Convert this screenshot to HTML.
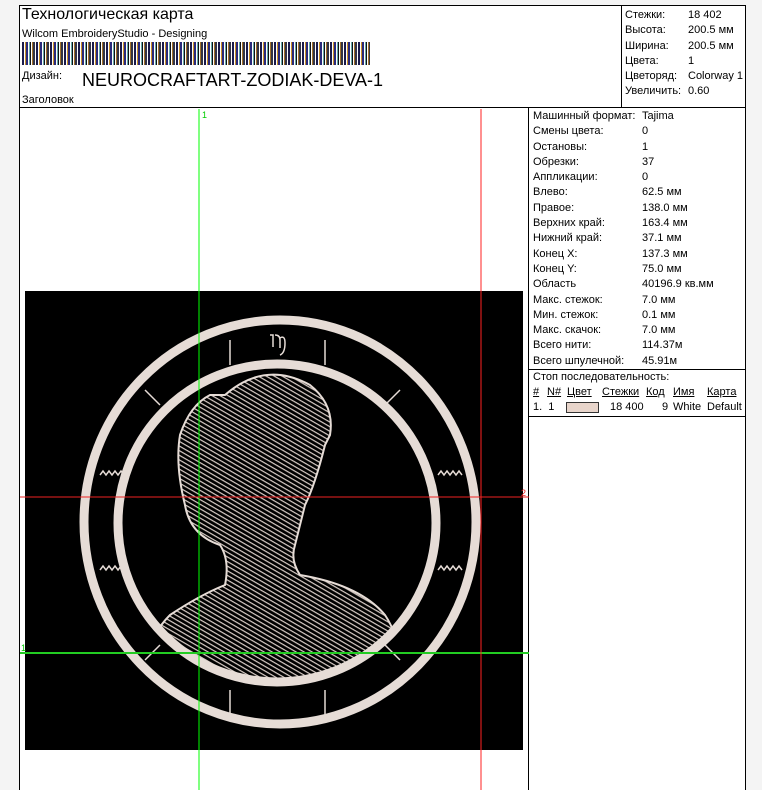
<!DOCTYPE html>
<html><head><meta charset="utf-8"><style>
*{margin:0;padding:0;box-sizing:border-box}
html,body{width:762px;height:790px;overflow:hidden}
body{background:#fff;position:relative;font-family:"Liberation Sans",sans-serif;color:#000}
.a{position:absolute;white-space:nowrap}
.s{font-size:11px;line-height:13px}
.l{position:absolute;background:#000}
</style></head><body>
<div style="position:absolute;left:0;top:0;width:762px;height:790px;background:#f4f4f4"></div>
<div style="position:absolute;left:19px;top:5px;width:727px;height:785px;background:#fff;border:1px solid #000;border-bottom:none"></div>
<div class="l" style="left:19px;top:107px;width:727px;height:1px"></div>
<div class="l" style="left:621px;top:5px;width:1px;height:102px"></div>
<div class="l" style="left:528px;top:107px;width:1px;height:683px"></div>
<div class="a" style="left:22px;top:6px;font-size:16px">Технологическая карта</div>
<div class="a s" style="left:22px;top:28px">Wilcom EmbroideryStudio - Designing</div>
<div class="a" style="left:22px;top:42px;width:348px;height:23px;background:repeating-linear-gradient(90deg,#1a1a4a 0 2px,#fff 2px 3px,#c8902a 3px 4px,#2a2a7a 4px 6px,#fff 6px 7px,#6aa 7px 8px,#111 8px 9px,#fff 9px 10px,#a0702a 10px 11px,#334 11px 13px,#fff 13px 14px)"></div>
<div class="a s" style="left:22px;top:70px">Дизайн:</div>
<div class="a" style="left:82px;top:70px;font-size:18px;line-height:20px">NEUROCRAFTART-ZODIAK-DEVA-1</div>
<div class="a s" style="left:22px;top:94px">Заголовок</div>
<div class="a s" style="left:625px;top:8px;line-height:15.3px">Стежки:<br>Высота:<br>Ширина:<br>Цвета:<br>Цветоряд:<br>Увеличить:</div>
<div class="a s" style="left:688px;top:8px;line-height:15.3px">18 402<br>200.5 мм<br>200.5 мм<br>1<br>Colorway 1<br>0.60</div>
<div class="a s" style="left:533px;top:109px;line-height:15.3px">Машинный формат:<br>Смены цвета:<br>Остановы:<br>Обрезки:<br>Аппликации:<br>Влево:<br>Правое:<br>Верхних край:<br>Нижний край:<br>Конец X:<br>Конец Y:<br>Область<br>Макс. стежок:<br>Мин. стежок:<br>Макс. скачок:<br>Всего нити:<br>Всего шпулечной:</div>
<div class="a s" style="left:642px;top:109px;line-height:15.3px">Tajima<br>0<br>1<br>37<br>0<br>62.5 мм<br>138.0 мм<br>163.4 мм<br>37.1 мм<br>137.3 мм<br>75.0 мм<br>40196.9 кв.мм<br>7.0 мм<br>0.1 мм<br>7.0 мм<br>114.37м<br>45.91м</div>
<div class="l" style="left:528px;top:369px;width:218px;height:1px"></div>
<div class="a s" style="left:533px;top:371px">Стоп последовательность:</div>
<div class="a s" style="left:533px;top:386px;text-decoration:underline">#</div>
<div class="a s" style="left:547px;top:386px;text-decoration:underline">N#</div>
<div class="a s" style="left:567px;top:386px;text-decoration:underline">Цвет</div>
<div class="a s" style="left:602px;top:386px;text-decoration:underline">Стежки</div>
<div class="a s" style="left:646px;top:386px;text-decoration:underline">Код</div>
<div class="a s" style="left:673px;top:386px;text-decoration:underline">Имя</div>
<div class="a s" style="left:707px;top:386px;text-decoration:underline">Карта</div>
<div class="a s" style="left:533px;top:401px">1.&nbsp; 1</div>
<div class="a" style="left:566px;top:402px;width:33px;height:11px;background:#e8d5cb;border:1px solid #333"></div>
<div class="a s" style="left:610px;top:401px">18 400</div>
<div class="a s" style="left:662px;top:401px">9</div>
<div class="a s" style="left:673px;top:401px">White</div>
<div class="a s" style="left:707px;top:401px">Default</div>
<div class="l" style="left:528px;top:416px;width:218px;height:1px"></div>
<svg class="a" style="left:0;top:0" width="762" height="790">
<defs>
<pattern id="h" width="4" height="4" patternUnits="userSpaceOnUse" patternTransform="rotate(30)"><rect width="4" height="1.2" fill="#d8ccc6"/></pattern>
<clipPath id="c"><ellipse cx="277" cy="523" rx="155" ry="155"/></clipPath>
</defs>
<rect x="25" y="291" width="498" height="459" fill="#000"/>
<g clip-path="url(#c)">
<path d="M225 395 q40 -35 85 -10 q25 20 20 50 l-5 10 q-10 40 -20 60 q-5 20 -10 40 q-5 15 5 30 q60 10 85 40 q20 30 20 90 l-270 0 q5 -60 35 -90 q30 -20 55 -30 q5 -25 -5 -40 q-30 -10 -35 -40 q-10 -40 -5 -70 q10 -30 30 -40z" fill="url(#h)" stroke="#e6dcd6" stroke-width="2"/>
</g>
<g fill="none" stroke="#e6dcd6">
<ellipse cx="280" cy="522" rx="196" ry="202" stroke-width="9"/>
<ellipse cx="277" cy="523" rx="159" ry="159" stroke-width="9"/>
<g stroke-width="1.5">
<path d="M270 335 h3 v12 M275 335 q5 0 5 5 v8 M280 338 q5 -3 5 5 q0 10 -5 12"/>
<path d="M100 475 l3-4 3 4 3-4 3 4 3-4 3 4 3-4 3 4 M100 570 l3-4 3 4 3-4 3 4 3-4 3 4 3-4 3 4 M438 475 l3-4 3 4 3-4 3 4 3-4 3 4 3-4 3 4 M438 570 l3-4 3 4 3-4 3 4 3-4 3 4 3-4 3 4"/>
<path d="M230 340 l0 25 M325 340 l0 25 M230 690 l0 25 M325 690 l0 25 M145 390 l15 15 M400 390 l-15 15 M145 660 l15 -15 M400 660 l-15 -15"/>
</g></g>
<line x1="199" y1="109" x2="199" y2="790" stroke="#0f0" stroke-width="1"/>
<line x1="20" y1="653" x2="529" y2="653" stroke="#2c2" stroke-width="2"/>
<line x1="481" y1="109" x2="481" y2="790" stroke="#f22" stroke-width="1"/>
<line x1="20" y1="497" x2="529" y2="497" stroke="#e22" stroke-width="1"/>
<text x="202" y="118" font-size="9" fill="#0c0" font-family="Liberation Sans">1</text>
<text x="21" y="651" font-size="9" fill="#0c0" font-family="Liberation Sans">1</text>
<text x="521" y="496" font-size="9" fill="#e22" font-family="Liberation Sans">2</text>
</svg>
</body></html>
